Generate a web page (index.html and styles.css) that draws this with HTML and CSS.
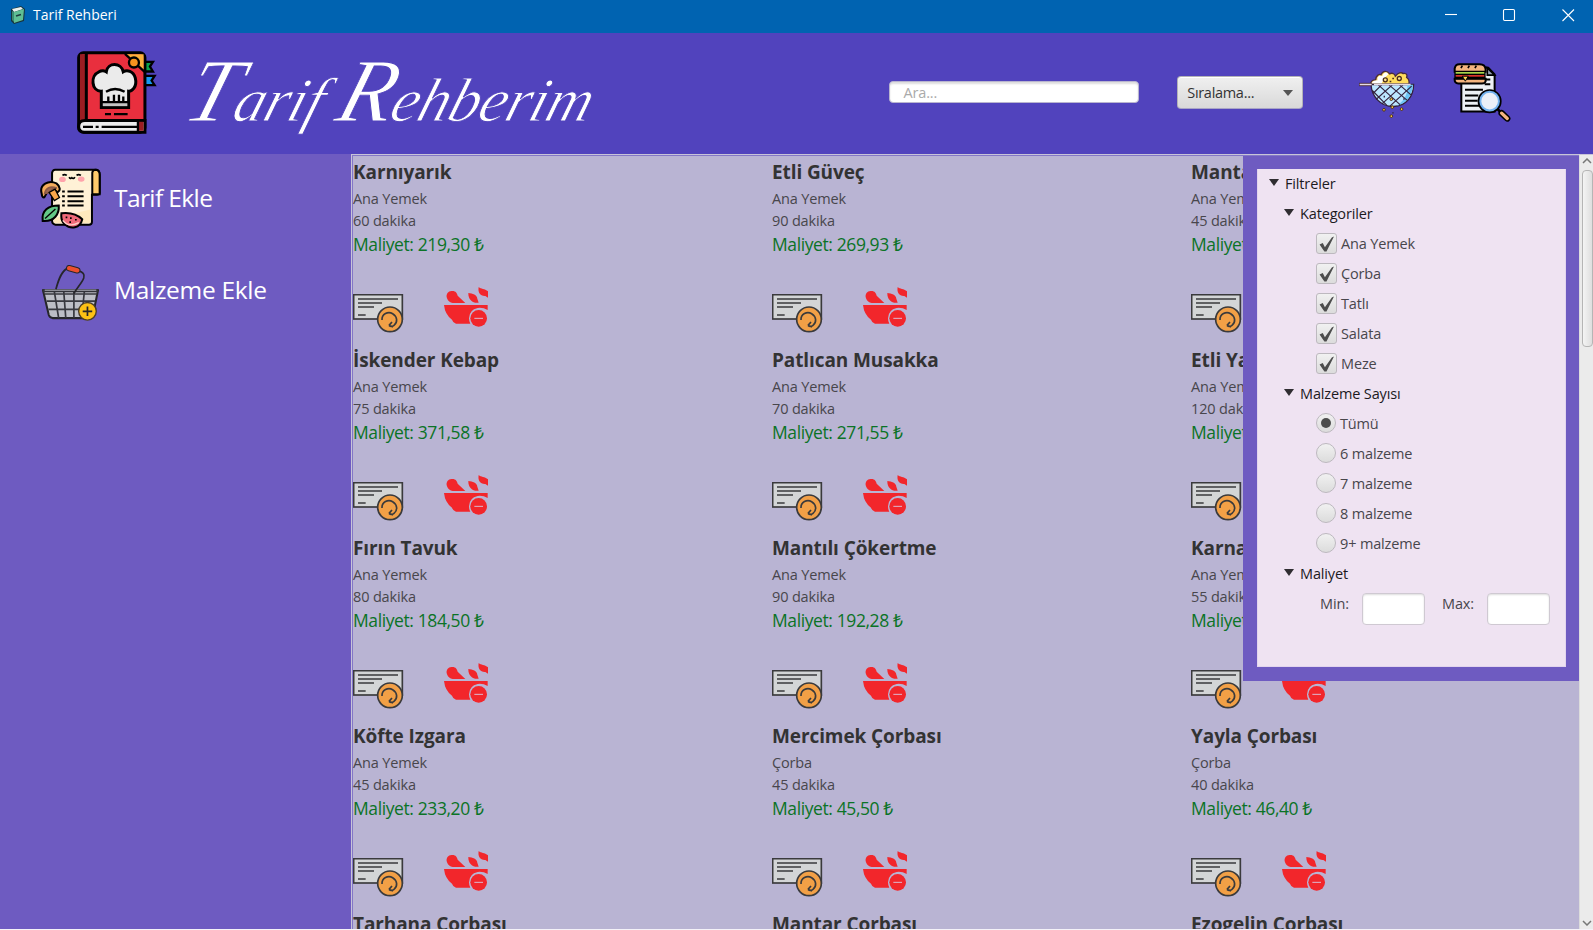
FILE: index.html
```html
<!DOCTYPE html>
<html lang="tr">
<head>
<meta charset="utf-8">
<title>Tarif Rehberi</title>
<link rel="stylesheet" href="styles.css">
</head>
<body>
<svg class="defs" width="0" height="0">
  <symbol id="receipt" viewBox="0 0 153 117">
    <rect x="2" y="2" width="146" height="73" fill="#d3d5d6" stroke="#3a3a3c" stroke-width="5"/>
    <path d="M15 15H135M15 27H87M15 39H63M15 63H38" stroke="#3a3a3c" stroke-width="5" fill="none"/>
    <circle cx="111" cy="76" r="37" fill="#f2a046" stroke="#3a3a3c" stroke-width="5"/>
    <path d="M87 78C86 60 105 51 119 59C133 67 135 85 123 94C118 98 112 98 108 94M108 94L117 84M108 94L120 99" fill="none" stroke="#3a3a3c" stroke-width="5"/>
  </symbol>
  <symbol id="bowl" viewBox="0 0 135 120">
    <g fill="#f2262b">
      <path d="M0 54H131V69Q117 61 101 63Q76 68 75 94Q75 103 79 110H36Q27 108 24 98Q3 83 0 54Z"/>
      <path d="M9 34C4 20 15 10 25 12C36 12 39 19 41 26L64 48H26Q14 47 9 34Z"/>
      <path d="M73 18C86 19 99 23 100 35L104 47C89 50 72 40 73 18Z"/>
      <path d="M104 0C111 7 122 4 132 13V32L124 27C109 28 101 17 104 0Z"/>
      <circle cx="104" cy="94" r="25"/>
    </g>
    <path d="M91 94H117" stroke="#dcb9cf" stroke-width="3"/>
  </symbol>
</svg>

<header class="titlebar">
  <svg class="app-icon" viewBox="0 0 16 18">
    <path d="M1 3L11 0L15 3L14 15L4 18L1 15Z" fill="#18343c"/>
    <path d="M2 3L11 1L13 3L4 6Z" fill="#e9f1ef"/>
    <path d="M4 6L14 3L13 14L4 17Z" fill="#5fbf94"/>
    <path d="M2 5L4 6V16L2 14Z" fill="#3b8c72"/>
    <path d="M6 10L11 8.5" stroke="#1d3c40" stroke-width="1.6"/>
  </svg>
  <span class="titlebar-text">Tarif Rehberi</span>
  <svg class="window-buttons" viewBox="0 0 130 14" fill="none" stroke="#fff" stroke-width="1.1">
    <path d="M0 6.5H12"/><rect x="58.5" y="1.500" width="11" height="11" rx="1.2"/><path d="M117.500 1.500L129 13M129 1.500L117.500 13"/>
  </svg>
</header>

<div class="header">
  <svg class="logo" viewBox="0 0 240 248">
    <path d="M202 32H228L219 46L228 61H202Z" fill="#0ba34a" stroke="#000" stroke-width="7"/>
    <path d="M202 74H233L224 88L233 102H202Z" fill="#1697f0" stroke="#000" stroke-width="7"/>
    <rect x="5" y="5" width="199" height="238" rx="14" fill="#e92f3e" stroke="#000" stroke-width="9"/>
    <path d="M9 9H26V208L9 216Z" fill="#9b1d22"/>
    <path d="M28 5V208" stroke="#000" stroke-width="9"/>
    <path d="M148 9H200V61Z" fill="#fbb03b"/>
    <path d="M144 8L204 63" stroke="#000" stroke-width="7"/>
    <circle cx="171" cy="34" r="15" fill="#f7931e" stroke="#000" stroke-width="7"/>
    <path d="M204 208H24Q5 208 5 226Q5 243 22 243H204Z" fill="#ebebeb" stroke="#000" stroke-width="9"/>
    <path d="M185 212H200V239H185Z" fill="#9b1d22"/><path d="M183 208V243" stroke="#000" stroke-width="7"/>
    <path d="M18 227H48M56 227H65M74 227H182" stroke="#000" stroke-width="7"/>
    <path d="M73 169V120C43 121 39 73 66 62C74 57 84 59 88 62C92 33 133 33 139 62C150 55 169 59 175 80C182 108 164 121 155 120V169Z" fill="#ebebeb" stroke="#000" stroke-width="9"/>
    <path d="M78 156H151V165H78Z" fill="#c4c4c4"/>
    <path d="M75 153H154M94 152V136M111 152V131M126 152V131M139 152V136M87 122Q114 105 143 122" fill="none" stroke="#000" stroke-width="7"/>
    <path d="M84 189H102M111 189H152" stroke="#000" stroke-width="7"/>
  </svg>
  <h1 class="brand"><span class="initial">T</span>arif <span class="initial">R</span>ehberim</h1>
  <div class="search">Ara...</div>
  <div class="combo"><span>Sıralama...</span><i class="caret"></i></div>
  <svg class="sieve" viewBox="0 0 168 146">
    <path d="M34 42C36 32 44 28 50 29C51 15 62 10 66 14C71 1 84 0 92 11C101 6 108 13 109 18C118 8 128 5 132 10C145 7 145 17 143 22C151 27 151 36 150 42Z" fill="#ffdc5c" stroke="#4a2c3c" stroke-width="4"/>
    <path d="M39 40C40 31 49 31 56 30C53 17 65 15 70 18C74 5 84 4 88 12L76 24L68 40Z" fill="#fff"/>
    <circle cx="79" cy="29" r="6" fill="#ffe68b" stroke="#4a2c1c" stroke-width="4"/><circle cx="121" cy="25" r="6" fill="#ffe68b" stroke="#4a2c1c" stroke-width="4"/>
    <path d="M100 25h5M92 34h5" stroke="#4a2c1c" stroke-width="4"/>
    <path d="M36 43H164C164 77 143 107 104 109C65 110 38 79 36 43Z" fill="#bce7ff" stroke="#32213d" stroke-width="4"/>
    <path d="M145 44H162C160 76 143 101 114 107C142 87 147 66 145 44Z" fill="#6cc5f5"/>
    <path d="M58 44L124 104M90 44L144 90M122 44L156 74M40 61L83 105M68 44L42 70M100 44L51 88M132 44L69 101M158 48L93 108" fill="none" stroke="#32213d" stroke-width="3.500"/>
    <path d="M0 43H38" stroke="#4a2c3c" stroke-width="10"/><path d="M2 43H38M45 43H155" stroke="#e5dae5" stroke-width="5"/>
    <g fill="#ffd34d" stroke="#4a2c1c" stroke-width="3"><circle cx="97" cy="87" r="4"/><circle cx="100" cy="111" r="4"/><circle cx="75" cy="119" r="4"/><circle cx="128" cy="117" r="4"/><circle cx="97" cy="138" r="4"/></g>
    <path d="M76 77v5M135 84v5M102 126v4" stroke="#32213d" stroke-width="4"/>
  </svg>
  <svg class="menu-doc" viewBox="0 0 174 176">
    <path d="M25 50V145H125V34L106 14H80Z" fill="#edf1f5" stroke="#000" stroke-width="6"/>
    <path d="M103 14V36H125Z" fill="#97a2b5" stroke="#000" stroke-width="5"/>
    <path d="M36 80H90M36 97H76M36 113H74M36 128H82M95 49H112M95 63H112" stroke="#000" stroke-width="6"/>
    <path d="M5 26V16Q7 3 19 3H80Q97 3 98 19V26ZM5 47H98V54Q96 61 87 61H16Q5 60 5 50Z" fill="#f4b57f" stroke="#000" stroke-width="6"/>
    <path d="M4 26H98V48H4Z" fill="#000"/><path d="M8 29H94" stroke="#a7d64b" stroke-width="5"/><path d="M8 38H94" stroke="#d9342b" stroke-width="5"/>
    <path d="M28 39H46L37 54Z" fill="#ffd552" stroke="#000" stroke-width="3"/>
    <path d="M28 7L24 15M49 7L45 15M70 7L66 15" stroke="#000" stroke-width="5"/>
    <circle cx="110" cy="114" r="32" fill="#eaf0f7" stroke="#000" stroke-width="8"/><circle cx="110" cy="114" r="28" fill="none" stroke="#73b3ef" stroke-width="6"/>
    <path d="M134 138L145 149" stroke="#000" stroke-width="8"/><path d="M146 150L163 166" stroke="#000" stroke-width="19" stroke-linecap="round"/><path d="M146 150L163 166" stroke="#f4b57f" stroke-width="10" stroke-linecap="round"/>
  </svg>
</div>

<div class="main">
  <nav class="sidebar">
    <a class="nav-item">
      <svg class="nav-icon" viewBox="0 0 182 182">
        <path d="M45 5H169Q178 8 178 20V75Q177 80 170 80H155V160Q155 169 146 169H46Q36 168 36 157V14Q38 5 45 5Z" fill="#fff1d6" stroke="#000" stroke-width="6"/>
        <path d="M156 78V14Q157 5 166 5Q178 6 178 20V78Z" fill="#ffcb6b" stroke="#000" stroke-width="6"/>
        <path d="M42 150L150 124V164H42Z" fill="#ffe9bd"/>
        <ellipse cx="67" cy="34" rx="10" ry="8" fill="#ffa3ab"/><ellipse cx="123" cy="33" rx="10" ry="8" fill="#ffa3ab"/>
        <path d="M67 22Q73 17 80 22M109 22Q115 17 122 22M87 27Q90 34 95 29Q100 34 104 27" fill="none" stroke="#000" stroke-width="5"/>
        <path d="M66 70H74M82 70H130M66 84H74M82 84H130M66 99H74M82 99H130M66 112H74M82 112H130" stroke="#000" stroke-width="6"/>
        <path d="M5 76C-3 50 26 34 49 46C61 55 61 68 54 71C47 75 47 57 31 65C16 72 17 85 12 88Q6 88 5 76Z" fill="#f6ad5c" stroke="#000" stroke-width="6"/>
        <path d="M14 76Q20 50 50 60Q36 60 27 74Z" fill="#9c6a50" stroke="#8c5a45" stroke-width="5"/>
        <path d="M27 73L43 97L58 88L45 63Z" fill="#f9a64b" stroke="#000" stroke-width="4"/>
        <path d="M8 158C4 126 25 112 56 112C58 137 43 161 8 158Z" fill="#63c887" stroke="#000" stroke-width="6"/><path d="M15 151L46 122" stroke="#000" stroke-width="4"/>
        <path d="M64 135C89 132 112 139 126 153C120 181 91 184 74 168Q61 157 64 135Z" fill="#f06a79" stroke="#000" stroke-width="6"/><path d="M68 156Q85 179 116 163" fill="none" stroke="#ffd0c8" stroke-width="4"/><path d="M79 145v5M92 147v5M107 152v5M90 159v5" stroke="#000" stroke-width="5"/>
      </svg>
      <span class="nav-first">Tarif Ekle</span>
    </a>
    <a class="nav-item">
      <svg class="nav-icon basket" viewBox="0 0 168 164">
        <path d="M3 74H165L149 153Q148 156 143 156H31Q22 154 20 147Z" fill="#bcbec6" stroke="#26262b" stroke-width="6"/>
        <path d="M8 85H162M14 106H157M19 130H150M36 76L49 155M64 76L70 155M94 76V155M125 76L117 155" fill="none" stroke="#37383f" stroke-width="5"/>
        <path d="M2 75H165" stroke="#303138" stroke-width="10"/><path d="M8 74H160" stroke="#8c8d96" stroke-width="4"/>
        <path d="M41 71C48 45 58 12 80 7M108 17Q128 22 123 38C117 55 101 68 94 84" fill="none" stroke="#26262b" stroke-width="5"/>
        <path d="M80 9L104 15" stroke="#26262b" stroke-width="19" stroke-linecap="round"/><path d="M80 9L104 15" stroke="#ed4f2e" stroke-width="13" stroke-linecap="round"/>
        <circle cx="134" cy="136" r="26" fill="#fdc114" stroke="#4b3d28" stroke-width="4"/><path d="M120 136H148M134 122V150" stroke="#26262b" stroke-width="5"/>
      </svg>
      <span class="nav-second">Malzeme Ekle</span>
    </a>
  </nav>

  <div class="scroll-pane">
    <div class="grid">
      <article class="card"><h2>Karnıyarık</h2><p>Ana Yemek</p><p>60 dakika</p><p class="cost">Maliyet: 219,30 ₺</p><div class="actions"><svg class="edit"><use href="#receipt"/></svg><svg class="remove"><use href="#bowl"/></svg></div></article>
      <article class="card"><h2>Etli Güveç</h2><p>Ana Yemek</p><p>90 dakika</p><p class="cost">Maliyet: 269,93 ₺</p><div class="actions"><svg class="edit"><use href="#receipt"/></svg><svg class="remove"><use href="#bowl"/></svg></div></article>
      <article class="card"><h2>Mantarlı</h2><p>Ana Yemek</p><p>45 dakika</p><p class="cost">Maliyet:</p><div class="actions"><svg class="edit"><use href="#receipt"/></svg><svg class="remove"><use href="#bowl"/></svg></div></article>
      <article class="card"><h2>İskender Kebap</h2><p>Ana Yemek</p><p>75 dakika</p><p class="cost">Maliyet: 371,58 ₺</p><div class="actions"><svg class="edit"><use href="#receipt"/></svg><svg class="remove"><use href="#bowl"/></svg></div></article>
      <article class="card"><h2>Patlıcan Musakka</h2><p>Ana Yemek</p><p>70 dakika</p><p class="cost">Maliyet: 271,55 ₺</p><div class="actions"><svg class="edit"><use href="#receipt"/></svg><svg class="remove"><use href="#bowl"/></svg></div></article>
      <article class="card"><h2>Etli Yaprak</h2><p>Ana Yemek</p><p>120 dakika</p><p class="cost">Maliyet:</p><div class="actions"><svg class="edit"><use href="#receipt"/></svg><svg class="remove"><use href="#bowl"/></svg></div></article>
      <article class="card"><h2>Fırın Tavuk</h2><p>Ana Yemek</p><p>80 dakika</p><p class="cost">Maliyet: 184,50 ₺</p><div class="actions"><svg class="edit"><use href="#receipt"/></svg><svg class="remove"><use href="#bowl"/></svg></div></article>
      <article class="card"><h2>Mantılı Çökertme</h2><p>Ana Yemek</p><p>90 dakika</p><p class="cost">Maliyet: 192,28 ₺</p><div class="actions"><svg class="edit"><use href="#receipt"/></svg><svg class="remove"><use href="#bowl"/></svg></div></article>
      <article class="card"><h2>Karnabahar</h2><p>Ana Yemek</p><p>55 dakika</p><p class="cost">Maliyet:</p><div class="actions"><svg class="edit"><use href="#receipt"/></svg><svg class="remove"><use href="#bowl"/></svg></div></article>
      <article class="card"><h2>Köfte Izgara</h2><p>Ana Yemek</p><p>45 dakika</p><p class="cost">Maliyet: 233,20 ₺</p><div class="actions"><svg class="edit"><use href="#receipt"/></svg><svg class="remove"><use href="#bowl"/></svg></div></article>
      <article class="card"><h2>Mercimek Çorbası</h2><p>Çorba</p><p>45 dakika</p><p class="cost">Maliyet: 45,50 ₺</p><div class="actions"><svg class="edit"><use href="#receipt"/></svg><svg class="remove"><use href="#bowl"/></svg></div></article>
      <article class="card"><h2>Yayla Çorbası</h2><p>Çorba</p><p>40 dakika</p><p class="cost">Maliyet: 46,40 ₺</p><div class="actions"><svg class="edit"><use href="#receipt"/></svg><svg class="remove"><use href="#bowl"/></svg></div></article>
      <article class="card"><h2>Tarhana Çorbası</h2></article>
      <article class="card"><h2>Mantar Çorbası</h2></article>
      <article class="card"><h2>Ezogelin Çorbası</h2></article>
    </div>

    <aside class="filters">
      <div class="filter-body">
        <div class="row"><i class="arrow"></i>Filtreler</div>
        <div class="row sub"><i class="arrow"></i>Kategoriler</div>
        <div class="row opt"><i class="check"><svg viewBox="0 0 14 15"><path d="M0.500 8L3.500 6.500L5.500 10.500L12 1.500L14 0.500L7 14.500H5Z"/></svg></i>Ana Yemek</div>
        <div class="row opt"><i class="check"><svg viewBox="0 0 14 15"><path d="M0.500 8L3.500 6.500L5.500 10.500L12 1.500L14 0.500L7 14.500H5Z"/></svg></i>Çorba</div>
        <div class="row opt"><i class="check"><svg viewBox="0 0 14 15"><path d="M0.500 8L3.500 6.500L5.500 10.500L12 1.500L14 0.500L7 14.500H5Z"/></svg></i>Tatlı</div>
        <div class="row opt"><i class="check"><svg viewBox="0 0 14 15"><path d="M0.500 8L3.500 6.500L5.500 10.500L12 1.500L14 0.500L7 14.500H5Z"/></svg></i>Salata</div>
        <div class="row opt"><i class="check"><svg viewBox="0 0 14 15"><path d="M0.500 8L3.500 6.500L5.500 10.500L12 1.500L14 0.500L7 14.500H5Z"/></svg></i>Meze</div>
        <div class="row sub"><i class="arrow"></i>Malzeme Sayısı</div>
        <div class="row opt"><i class="radio on"></i>Tümü</div>
        <div class="row opt"><i class="radio"></i>6 malzeme</div>
        <div class="row opt"><i class="radio"></i>7 malzeme</div>
        <div class="row opt"><i class="radio"></i>8 malzeme</div>
        <div class="row opt"><i class="radio"></i>9+ malzeme</div>
        <div class="row sub"><i class="arrow"></i>Maliyet</div>
        <div class="range"><span class="min">Min:</span><i class="field"></i><span class="max">Max:</span><i class="field"></i></div>
      </div>
    </aside>
  </div>

  <div class="scrollbar">
    <svg class="chevron" viewBox="0 0 10 6"><path d="M1 5L5 1L9 5" /></svg>
    <div class="track"><div class="thumb"></div></div>
    <svg class="chevron" viewBox="0 0 10 6"><path d="M1 1L5 5L9 1" /></svg>
  </div>
</div>
</body>
</html>
```
FILE: styles.css
```css
* { box-sizing: border-box; }
body { margin: 0; width: 1593px; height: 930px; overflow: hidden; background: #f4f2f8; font-family: "Open Sans", "Noto Sans", sans-serif; font-size: 14.5px; letter-spacing: -0.15px; color: #48464c; }
.defs { position: absolute; }

.titlebar { height: 33px; background: #0063b1; display: flex; align-items: center; padding: 0 18px 4px 10px; color: #fff; }
.app-icon { width: 16px; height: 18px; }
.titlebar-text { margin-left: 7px; font-size: 14px; letter-spacing: 0; }
.window-buttons { margin-left: auto; width: 130px; height: 14px; }

.header { height: 121px; background: #5143bd; display: flex; align-items: flex-start; padding: 0 82px 0 77px; }
.logo { width: 80px; height: 83px; margin-top: 18px; }
.brand { margin: 13px 0 0 21px; width: 427px; height: 104px; font: italic 400 62px/104px "Liberation Serif", serif; letter-spacing: -0.5px; color: #fff; white-space: nowrap; -webkit-text-stroke: 0.9px #5143bd; transform: skewX(-17deg); transform-origin: 0 80%; }
.initial { font-size: 90px; line-height: 1; }
.search { width: 250px; height: 22px; margin: 48px 0 0 285px; padding-left: 13px; line-height: 21px; background: #fff; border: 1px solid #b9b5cf; border-radius: 4px; box-shadow: inset 0 2px 2px #dedede; color: #aaa; }
.combo { width: 126px; height: 33px; margin: 43px 0 0 38px; padding: 0 9px 0 9px; display: flex; align-items: center; justify-content: space-between; border: 1px solid #b3b3b7; border-bottom-color: #a9a5c6; border-radius: 4px; background: linear-gradient(#f0f0f0, #d9d9d9); box-shadow: inset 0 1px 0 #fff; color: #333; letter-spacing: -0.3px; }
.caret { border: 5px solid transparent; border-top: 6px solid #555; border-bottom: 0; }
.sieve { width: 56px; height: 49px; margin: 37px 0 0 56px; }
.menu-doc { width: 58px; height: 59px; margin: 30px 0 0 38px; }

.main { height: 775px; display: flex; }
.sidebar { width: 351px; background: #6e5bc1; display: flex; flex-direction: column; align-items: flex-start; padding: 14px 0 0 40px; gap: 33px; }
.nav-item { display: flex; align-items: center; gap: 13px; height: 61px; font-size: 24.5px; line-height: 34px; color: #fff; }
.nav-icon { width: 61px; height: 61px; }
.basket { width: 57px; height: 56px; margin: 0 2px; }
.nav-first { margin-top: -2px; letter-spacing: -0.6px; }
.nav-second { margin-top: -6px; letter-spacing: -0.3px; }

.scroll-pane { position: relative; width: 1228px; padding: 1px 0 0 1px; border: 1px solid #c8c4d8; border-right: 0; border-bottom: 0; background: #b9b4d3; box-shadow: inset 1px 1px 0 #8377c6; overflow: hidden; }
.grid { display: grid; grid-template-columns: repeat(3, 419px); grid-auto-rows: 188px; }
.card h2 { margin: 2px 0 0; font-size: 19px; line-height: 28px; letter-spacing: -0.1px; font-weight: 700; color: #333; }
.card p { margin: 0; line-height: 22px; }
.card p:first-of-type { margin-top: 2px; }
.card p.cost { font-size: 17.500px; line-height: 25px; letter-spacing: -0.4px; color: #0b7326; }
.actions { display: flex; gap: 40px; margin-top: 30px; }
.edit { width: 51px; height: 39px; margin-top: 7px; }
.remove { width: 45px; height: 40px; }

.filters { position: absolute; top: 1px; right: 0; width: 336px; height: 525px; padding: 13px 13px 14px 14px; background: #6e5bc1; }
.filter-body { height: 498px; padding-top: 0; background: #efe3f2; border: 1px solid #e2d5ee; border-top: 0; }
.row { height: 30px; display: flex; align-items: center; padding: 0 0 2px 11px; color: #1c1a1e; }
.row.sub { padding-left: 26px; }
.row.opt { padding-left: 58px; color: #48464c; }
.arrow { width: 10px; border: 5px solid transparent; border-top: 7px solid #2f2d31; border-bottom: 0; margin: -2px 6px 0 0; }
.check { width: 21px; height: 21px; margin: 1px 4px 0 0; display: flex; align-items: center; justify-content: center; border: 1px solid #bdb9bf; border-radius: 3px; background: linear-gradient(#f1f1f1, #dcdcdc); }
.check svg { flex: none; width: 15px; height: 16px; fill: #4d4d4d; }
.radio { width: 20px; height: 20px; margin-right: 4px; border: 1px solid #bdb9bf; border-radius: 50%; background: linear-gradient(#f1f1f1, #dcdcdc); display: flex; align-items: center; justify-content: center; }
.on::after { content: ""; width: 10px; height: 10px; border-radius: 50%; background: #4d4d4d; }
.range { display: flex; align-items: flex-start; padding: 4px 0 0 62px; }
.range span { line-height: 22px; }
.min { width: 42px; }
.max { width: 45px; margin-left: 17px; }
.field { width: 63px; height: 32px; border: 1px solid #cfc9d2; border-radius: 4px; background: #fff; box-shadow: inset 0 1px 2px #ddd; }

.scrollbar { width: 14px; background: #ebebeb; border-top: 1px solid #c8c4d8; border-left: 1px solid #dcdcdc; display: flex; flex-direction: column; align-items: center; padding: 3px 0; }
.chevron { width: 10px; height: 6px; fill: none; stroke: #777; stroke-width: 1.5; }
.track { flex: 1; width: 100%; padding: 6px 0 0 2px; }
.thumb { width: 11px; height: 177px; border: 1px solid #b5b5b5; border-radius: 4px; background: linear-gradient(90deg, #f4f4f4, #dedede); }
```
